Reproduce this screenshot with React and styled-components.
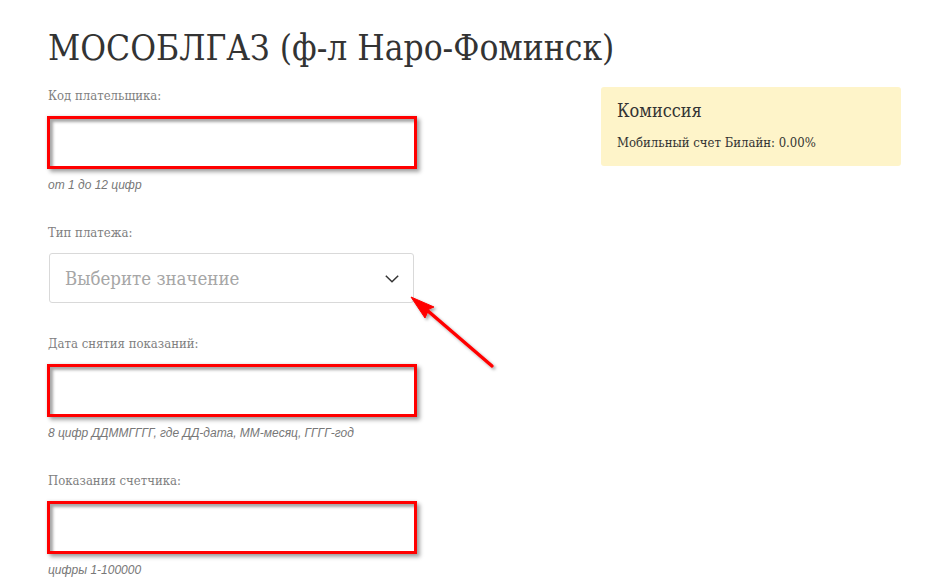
import React from 'react';
import styled, { createGlobalStyle } from 'styled-components';

const GlobalStyle = createGlobalStyle`
  html, body {
    margin: 0;
    padding: 0;
    background: #fff;
  }
  body {
    font-family: 'DejaVu Serif Condensed', 'DejaVu Serif', serif;
    color: #333;
  }
`;

const fields = [
  { label: 'Код плательщика:', hint: 'от 1 до 12 цифр' },
  { label: 'Тип платежа:', select: 'Выберите значение' },
  { label: 'Дата снятия показаний:', hint: '8 цифр ДДММГГГГ, где ДД-дата, ММ-месяц, ГГГГ-год' },
  { label: 'Показания счетчика:', hint: 'цифры 1-100000' },
];

function Chevron() {
  return (
    <svg width='14' height='8' viewBox='0 0 14 8'>
      <path d='M0.8 0.8 L7 6.8 L13.2 0.8' fill='none' stroke='#333' strokeWidth='1.5' />
    </svg>
  );
}

// red annotation arrow pointing at the select
function Arrow() {
  return (
    <ArrowLayer width='110' height='100' viewBox='0 0 110 100'>
      <defs>
        <filter id='arrow-shadow' x='-20%' y='-20%' width='160%' height='160%'>
          <feDropShadow dx='2' dy='2' stdDeviation='1.5' floodColor='#000' floodOpacity='0.35' />
        </filter>
      </defs>
      <g filter='url(#arrow-shadow)' fill='#f00' stroke='#f00'>
        <line x1='24' y1='24' x2='88' y2='79' strokeWidth='3.4' strokeLinecap='round' />
        <polygon points='7,10 30,20 25,22 21,31' strokeWidth='1' strokeLinejoin='round' />
      </g>
    </ArrowLayer>
  );
}

export default function App() {
  return (
    <>
      <GlobalStyle />
      <Page>
        <Title>МОСОБЛГАЗ (ф-л Наро-Фоминск)</Title>
        <Columns>
          <Form>
            {fields.map((f) => (
              <Field key={f.label}>
                <Label>{f.label}</Label>
                {f.select ? (
                  <Select>
                    <span>{f.select}</span>
                    <Chevron />
                  </Select>
                ) : (
                  <MarkedInput />
                )}
                {f.hint && <Hint>{f.hint}</Hint>}
              </Field>
            ))}
            <Arrow />
          </Form>
          <Commission>
            <h3>Комиссия</h3>
            <p>Мобильный счет Билайн: 0.00%</p>
          </Commission>
        </Columns>
      </Page>
    </>
  );
}

const Page = styled.main`
  width: 940px;
  height: 580px;
  overflow: hidden;
  padding: 26px 0 0 48px;
  box-sizing: border-box;
`;

const Title = styled.h1`
  margin: 0;
  font-family: 'DejaVu Serif Condensed', 'DejaVu Serif', serif;
  font-weight: normal;
  font-size: 35px;
  line-height: 44px;
  color: #333;
  white-space: nowrap;
`;

const Columns = styled.div`
  display: flex;
  align-items: flex-start;
  gap: 185px;
  margin-top: 17px;
`;

const Form = styled.div`
  position: relative;
  width: 368px;
  display: flex;
  flex-direction: column;
  gap: 32px;
`;

const Field = styled.div`
  display: flex;
  flex-direction: column;
`;

const Label = styled.label`
  font-size: 13px;
  line-height: 18px;
  color: #808080;
  margin-bottom: 11px;
`;

const MarkedInput = styled.div`
  height: 53px;
  box-sizing: border-box;
  margin: 0 -1px;
  border: 3px solid #f00;
  background: #fff;
  box-shadow: inset 3px 3px 3px rgba(0, 0, 0, 0.35), 3px 3px 4px rgba(0, 0, 0, 0.35),
    0 0 3px rgba(0, 0, 0, 0.12);
`;

const Select = styled.div`
  height: 50px;
  box-sizing: border-box;
  margin: 0 2px 0 1px;
  padding: 0 14px 0 15px;
  display: flex;
  align-items: center;
  justify-content: space-between;
  border: 1px solid #d9d9d9;
  border-radius: 3px;
  background: #fff;
  span {
    font-size: 18.5px;
    color: #a6a6a6;
  }
  svg {
    margin-top: 1px;
  }
`;

const Hint = styled.div`
  margin-top: 9px;
  font-family: 'Liberation Sans', Arial, sans-serif;
  font-style: italic;
  font-size: 12px;
  line-height: 14px;
  color: #777;
`;

const ArrowLayer = styled.svg`
  position: absolute;
  left: 356px;
  top: 200px;
  pointer-events: none;
`;

const Commission = styled.aside`
  width: 300px;
  box-sizing: border-box;
  padding: 12px 16px 14px;
  background: #fef4c9;
  border-radius: 3px;
  h3 {
    margin: 0 0 11px;
    font-weight: normal;
    font-size: 18px;
    line-height: 24px;
    color: #333;
  }
  p {
    margin: 0;
    font-size: 13px;
    line-height: 18px;
    color: #333;
  }
`;
